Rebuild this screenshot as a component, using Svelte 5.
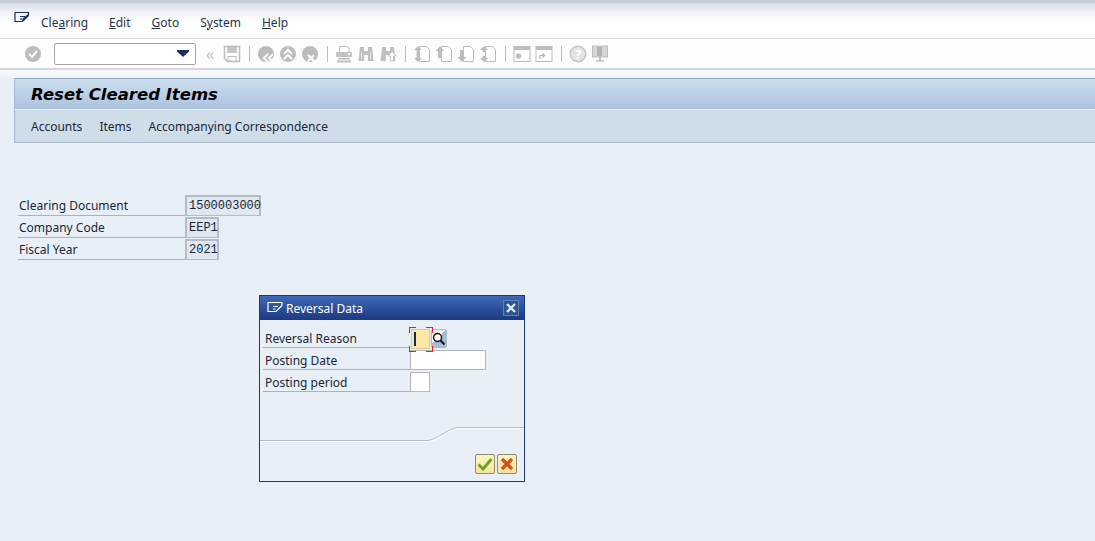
<script>
  const menus = [
    ['Cle', 'a', 'ring'], ['', 'E', 'dit'], ['', 'G', 'oto'], ['S', 'y', 'stem'], ['', 'H', 'elp']
  ];
  const mainFields = [
    { label: 'Clearing Document', value: '1500003000', cls: 'w76' },
    { label: 'Company Code', value: 'EEP1', cls: 'w34' },
    { label: 'Fiscal Year', value: '2021', cls: 'w34' }
  ];
</script>

<div class="page">
  <header class="menubar">
    <svg class="menu-icon" width="16" height="14" viewBox="0 0 16 14">
      <path d="M1 1.5h13.5v3M14.5 4.5 8.5 10.5H1V1.5M6 5.5h5M6 8h2.5M8.500 10.500l1-3 5-4" fill="none" stroke="#1c2f63" stroke-width="1.200"/>
    </svg>
    <nav class="menus">
      {#each menus as m}
        <span>{m[0]}<u>{m[1]}</u>{m[2]}</span>
      {/each}
    </nav>
  </header>

  <div class="toolbar">
    <span class="tb first">
      <svg width="18" height="18" viewBox="0 0 18 18"><circle cx="9" cy="9" r="8" fill="#bcbcbc"/><path d="M5 9l3 3 5-6" fill="none" stroke="#fff" stroke-width="2"/></svg>
    </span>
    <div class="combo"><svg width="12" height="7" viewBox="0 0 12 7"><path d="M0 0h12v1.500L6 7 0 1.500z" fill="#1c2f63"/></svg></div>
    <span class="tb chev">«</span>
    <span class="tb">
      <svg width="18" height="18" viewBox="0 0 18 18"><path d="M1.500 1.500h15v15h-12l-3-3z" fill="#fff" stroke="#bdbdbd" stroke-width="1.500"/><rect x="4" y="2" width="10" height="6" fill="#c8c8c8"/><rect x="5" y="11.500" width="8" height="4.500" fill="#fff" stroke="#bdbdbd"/></svg>
    </span>
    <span class="sep"></span>
    <span class="tb">
      <svg width="18" height="18" viewBox="0 0 18 18"><circle cx="9" cy="9" r="8" fill="#bcbcbc"/><path d="M11 9l-4 4 4 4M16 9l-4 4 4 4" fill="none" stroke="#fff" stroke-width="2"/></svg>
    </span>
    <span class="tb">
      <svg width="18" height="18" viewBox="0 0 18 18"><circle cx="9" cy="9" r="8" fill="#bcbcbc"/><path d="M5 9l4-4 4 4M5 14l4-4 4 4" fill="none" stroke="#fff" stroke-width="2"/></svg>
    </span>
    <span class="tb">
      <svg width="18" height="18" viewBox="0 0 18 18"><circle cx="9" cy="9" r="8" fill="#bcbcbc"/><path d="M7 10l6 6M13 10l-6 6" fill="none" stroke="#fff" stroke-width="2.200"/></svg>
    </span>
    <span class="sep"></span>
    <span class="tb">
      <svg width="18" height="18" viewBox="0 0 18 18"><path d="M4.500 7V1.500h8l1.500 1.500v4" fill="#fff" stroke="#bdbdbd"/><rect x="1" y="7" width="16" height="5" rx="1" fill="#c4c4c4"/><rect x="13" y="8.500" width="2" height="1.500" fill="#fff"/><rect x="3" y="13" width="12" height="1.500" fill="#bdbdbd"/><rect x="2" y="15.500" width="14" height="2" fill="#bdbdbd"/></svg>
    </span>
    <span class="tb">
      <svg width="18" height="18" viewBox="0 0 18 18"><path d="M3 2h4v4h4V2h4l1.500 14h-5.500V10H7v6H1.500z" fill="#c0c0c0"/><path d="M4.500 7v7M13.500 7v7" stroke="#e4e4e4"/></svg>
    </span>
    <span class="tb">
      <svg width="18" height="18" viewBox="0 0 18 18"><path d="M3 2h4v4h4V2h4l1.500 14h-5.500V10H7v6H1.500z" fill="#c0c0c0"/><path d="M13 6l4 5h-2.500v5h-3v-5H9z" fill="#fff" stroke="#c0c0c0"/></svg>
    </span>
    <span class="sep"></span>
    <span class="tb">
      <svg width="18" height="18" viewBox="0 0 18 18"><path d="M6.500 1.500h7l3 3v12h-10z" fill="#fff" stroke="#bdbdbd"/><path d="M5 1 9 5H1zM5 17 9 13H1zM3.500 5h3v8h-3z" fill="#bdbdbd"/></svg>
    </span>
    <span class="tb">
      <svg width="18" height="18" viewBox="0 0 18 18"><path d="M6.500 1.500h7l3 3v12h-10z" fill="#fff" stroke="#bdbdbd"/><path d="M5 1 9.500 6H7v7H3V6H.5z" fill="#bdbdbd"/></svg>
    </span>
    <span class="tb">
      <svg width="18" height="18" viewBox="0 0 18 18"><path d="M6.500 1.500h7l3 3v12h-10z" fill="#fff" stroke="#bdbdbd"/><path d="M5 17 9.500 12H7V5H3v7H.5z" fill="#bdbdbd"/></svg>
    </span>
    <span class="tb">
      <svg width="18" height="18" viewBox="0 0 18 18"><path d="M6.500 1.500h7l3 3v12h-10z" fill="#fff" stroke="#bdbdbd"/><path d="M5 1 9 5H1zM5 17 9 13H1zM3.500 5h3v2h-3zM3.500 11h3v2h-3z" fill="#bdbdbd"/></svg>
    </span>
    <span class="sep"></span>
    <span class="tb">
      <svg width="18" height="18" viewBox="0 0 18 18"><rect x="1" y="1.500" width="16" height="15" fill="#fff" stroke="#bdbdbd"/><rect x="1" y="1" width="16" height="4" fill="#bdbdbd"/><path d="M5.500 8v6M2.500 11h6M3.500 9l4 4M7.500 9l-4 4" stroke="#bdbdbd" stroke-width="1.300"/></svg>
    </span>
    <span class="tb">
      <svg width="18" height="18" viewBox="0 0 18 18"><rect x="1" y="1.500" width="16" height="15" fill="#fff" stroke="#bdbdbd"/><rect x="1" y="1" width="16" height="4" fill="#bdbdbd"/><path d="M5 14v-3.500h4M7.500 8.500l2 2-2 2" fill="none" stroke="#b0b0b0" stroke-width="1.200"/></svg>
    </span>
    <span class="sep"></span>
    <span class="tb">
      <svg width="18" height="18" viewBox="0 0 18 18"><circle cx="9" cy="9" r="7.800" fill="#e4e4e4" stroke="#c4c4c4" stroke-width="1.400"/><text x="9" y="13.500" class="help-mark" text-anchor="middle">?</text></svg>
    </span>
    <span class="tb">
      <svg width="18" height="18" viewBox="0 0 18 18"><rect x="1.500" y="1" width="15" height="11" fill="#d6d6d6" stroke="#bdbdbd"/><rect x="6" y="2" width="5" height="9" fill="#b4b4b4"/><path d="M8 12h2v3H8zM5 15h8v1.500H5z" fill="#bdbdbd"/></svg>
    </span>
  </div>

  <div class="gap-strip"></div>

  <div class="content">
    <div class="title">Reset Cleared Items</div>
    <div class="appbar">
      <span>Accounts</span><span>Items</span><span>Accompanying Correspondence</span>
    </div>

    <section class="form">
      {#each mainFields as f}
        <div class="row">
          <span class="label">{f.label}</span>
          <span class="value {f.cls}">{f.value}</span>
        </div>
      {/each}
    </section>
  </div>

  <div class="dialog">
    <div class="dlg-title">
      <svg width="17" height="14" viewBox="0 0 17 14"><path d="M1 1.500h14v3M15 4.500 9 10.500H1V1.500M6 5.500h5M6 8h2.500" fill="none" stroke="#fff" stroke-width="1.200"/></svg>
      <span>Reversal Data</span>
      <span class="close"><svg width="10" height="10" viewBox="0 0 10 10"><path d="M1 1l8 8M9 1l-8 8" stroke="#d6e4f6" stroke-width="2.400"/></svg></span>
    </div>
    <div class="dlg-body">
      <div class="drow">
        <span class="dlabel">Reversal Reason</span>
        <span class="focus">
          <span class="input yellow"><i class="caret"></i></span>
          <i class="corner tl"></i><i class="corner tr"></i><i class="corner bl"></i><i class="corner br"></i>
        </span>
        <span class="f4">
          <svg width="14" height="14" viewBox="0 0 14 14"><circle cx="5.500" cy="5.500" r="4" fill="#fff" stroke="#111" stroke-width="1.400"/><path d="M8.500 8.500l4 4" stroke="#111" stroke-width="2"/></svg>
        </span>
      </div>
      <div class="drow">
        <span class="dlabel">Posting Date</span>
        <span class="input date"></span>
      </div>
      <div class="drow">
        <span class="dlabel">Posting period</span>
        <span class="input period"></span>
      </div>
    </div>
    <div class="dlg-foot">
      <svg class="curve" width="264" height="16" viewBox="0 0 264 16">
        <path d="M0 14.500h167c8 0 18-10 30-13h67" fill="none" stroke="#b4bcc8" stroke-width="1"/>
        <path d="M0 15.500h168c8 0 18-10 30-13h66" fill="none" stroke="#fff" stroke-width="1"/>
      </svg>
      <div class="btns">
        <span class="btn"><svg width="16" height="14" viewBox="0 0 16 14"><path d="M1.500 7.500l4.500 4.500 8.500-10" fill="none" stroke="#6ea32a" stroke-width="3"/></svg></span>
        <span class="btn"><svg width="14" height="14" viewBox="0 0 14 14"><path d="M2 2l10 10M12 2L2 12" stroke="#d8501c" stroke-width="3.400"/></svg></span>
      </div>
    </div>
  </div>
</div>

<style>
  :global(body) {
    margin: 0;
    background: #e8eff7;
  }
  .page {
    position: relative;
    width: 1095px;
    height: 541px;
    overflow: hidden;
    background: #e8eff7;
    font-family: "Noto Sans", "Open Sans", sans-serif;
    font-size: 12px;
    color: #1b2638;
  }
  .menubar {
    box-sizing: border-box;
    height: 39px;
    display: flex;
    align-items: center;
    padding: 3px 0 0 14px;
    border-top: 3px solid #c9d0da;
    border-bottom: 1px solid #dcdfe4;
    background: linear-gradient(#d6deea 0, #f2f5f9 10px, #fff 20px);
  }
  .menu-icon {
    margin-top: -9px;
  }
  .menus {
    display: flex;
    gap: 21px;
    margin-left: 11px;
    color: #24334f;
  }
  .toolbar {
    box-sizing: border-box;
    height: 31px;
    display: flex;
    align-items: center;
    padding-left: 22px;
    background: #fdfdfe;
    border-bottom: 2px solid #d3d6db;
  }
  .tb {
    width: 22px;
    height: 22px;
    flex: none;
    display: flex;
    align-items: center;
    justify-content: center;
  }
  .chev {
    margin-left: 3px;
    color: #c4c4c4;
    font-size: 17px;
    line-height: 1;
  }
  .sep {
    flex: none;
    width: 1px;
    height: 16px;
    margin: 0 5.5px;
    background: #a9c3dd;
  }
  .combo {
    box-sizing: border-box;
    width: 142px;
    height: 22px;
    margin-left: 10px;
    display: flex;
    align-items: center;
    justify-content: flex-end;
    padding-right: 6px;
    background: #fff;
    border: 1px solid #a3a7ab;
    border-radius: 2px;
  }
  .help-mark {
    font: bold 13px "Noto Sans", sans-serif;
    fill: #fff;
  }
  .gap-strip {
    height: 8px;
    background: linear-gradient(#f8fafc, #eef2f7);
  }
  .content {
    padding-left: 14px;
  }
  .title {
    box-sizing: border-box;
    height: 31px;
    padding-left: 16px;
    display: flex;
    align-items: center;
    font: italic bold 16.500px "DejaVu Sans", sans-serif;
    color: #000;
    border-top: 1px solid #8fa6c2;
    border-left: 1px solid #a7b8cb;
    background: linear-gradient(#cddfef, #abc3dc);
  }
  .appbar {
    box-sizing: border-box;
    height: 34px;
    display: flex;
    align-items: center;
    gap: 17px;
    padding-left: 16px;
    border-top: 1px solid #e6eff7;
    border-left: 1px solid #a7b8cb;
    border-bottom: 1px solid #a7b6c6;
    background: #cfdde8;
    color: #1b2638;
  }
  .form {
    margin: 51px 0 0 4px;
  }
  .row {
    display: flex;
    height: 22px;
    align-items: flex-end;
  }
  .label {
    box-sizing: border-box;
    width: 167px;
    height: 22px;
    line-height: 23px;
    padding-left: 1px;
    border-bottom: 1px solid #aab2bb;
  }
  .value {
    box-sizing: border-box;
    height: 21px;
    padding: 0 0 0 2px;
    display: flex;
    align-items: center;
    font: 12px "Liberation Mono", monospace;
    color: #1b2638;
    background: #dfe8f1;
    border: 2px solid #b6bcc4;
    border-bottom-width: 1px;
    letter-spacing: 0;
  }
  .w76 {
    width: 76px;
  }
  .w34 {
    width: 34px;
  }
  .dialog {
    position: absolute;
    left: 259px;
    top: 295px;
    box-sizing: border-box;
    width: 266px;
    height: 187px;
    display: flex;
    flex-direction: column;
    background: #e8eff7;
    border: 1px solid #1d3a78;
  }
  .dlg-title {
    flex: none;
    box-sizing: border-box;
    height: 24px;
    display: flex;
    align-items: center;
    gap: 2px;
    padding: 0 5px 0 7px;
    color: #fff;
    background: linear-gradient(#4069b4, #1b3a80);
  }
  .close {
    margin-left: auto;
    box-sizing: border-box;
    width: 16px;
    height: 16px;
    display: flex;
    align-items: center;
    justify-content: center;
    background: #2f558f;
    border: 1px solid #5d7fb4;
  }
  .dlg-body {
    flex: none;
    padding: 7px 0 0 3px;
  }
  .drow {
    height: 22px;
    display: flex;
    align-items: flex-start;
  }
  .dlabel {
    box-sizing: border-box;
    width: 147px;
    height: 21px;
    padding-left: 2px;
    line-height: 23px;
    border-bottom: 1px solid #aab2bb;
    flex: none;
  }
  .input {
    display: block;
    box-sizing: border-box;
    height: 20px;
    background: #fff;
    border: 1px solid #b4b8be;
    flex: none;
  }
  .date {
    width: 76px;
    margin-top: 1px;
  }
  .period {
    width: 20px;
    margin-top: 1px;
  }
  .focus {
    position: relative;
    width: 20px;
    height: 20px;
    flex: none;
    margin-top: 2px;
  }
  .yellow {
    position: relative;
    margin-left: 1px;
    width: 19px;
    background: #fbe9a4;
    border-color: #d9c98c;
  }
  .caret {
    position: absolute;
    left: 2px;
    top: 2px;
    width: 2px;
    height: 14px;
    background: #14246a;
  }
  .corner {
    position: absolute;
    width: 6px;
    height: 5px;
    border: 0 solid #e0202a;
  }
  .tl {
    left: -1px;
    top: -2px;
    border-width: 1.500px 0 0 1.500px;
  }
  .tr {
    right: -3px;
    top: -2px;
    border-width: 1.500px 1.500px 0 0;
  }
  .bl {
    left: -1px;
    bottom: -3px;
    border-width: 0 0 1.500px 1.500px;
  }
  .br {
    right: -3px;
    bottom: -3px;
    border-width: 0 1.500px 1.500px 0;
  }
  .f4 {
    box-sizing: border-box;
    width: 16px;
    height: 19px;
    margin: 2px 0 0 1px;
    display: flex;
    align-items: center;
    justify-content: center;
    background: linear-gradient(135deg, #fff 45%, #a9bbd0 45%);
    border: 1px solid #a9bbd0;
    border-radius: 2px;
  }
  .dlg-foot {
    position: relative;
    flex: 1;
  }
  .curve {
    position: absolute;
    left: 0;
    top: 33px;
  }
  .btns {
    position: absolute;
    right: 7px;
    bottom: 7px;
    display: flex;
    gap: 2px;
  }
  .btn {
    box-sizing: border-box;
    width: 20px;
    height: 20px;
    display: flex;
    align-items: center;
    justify-content: center;
    background: linear-gradient(#fdf3c4, #f8e39c);
    border: 1px solid #8f8a68;
    border-radius: 2px;
  }
</style>
